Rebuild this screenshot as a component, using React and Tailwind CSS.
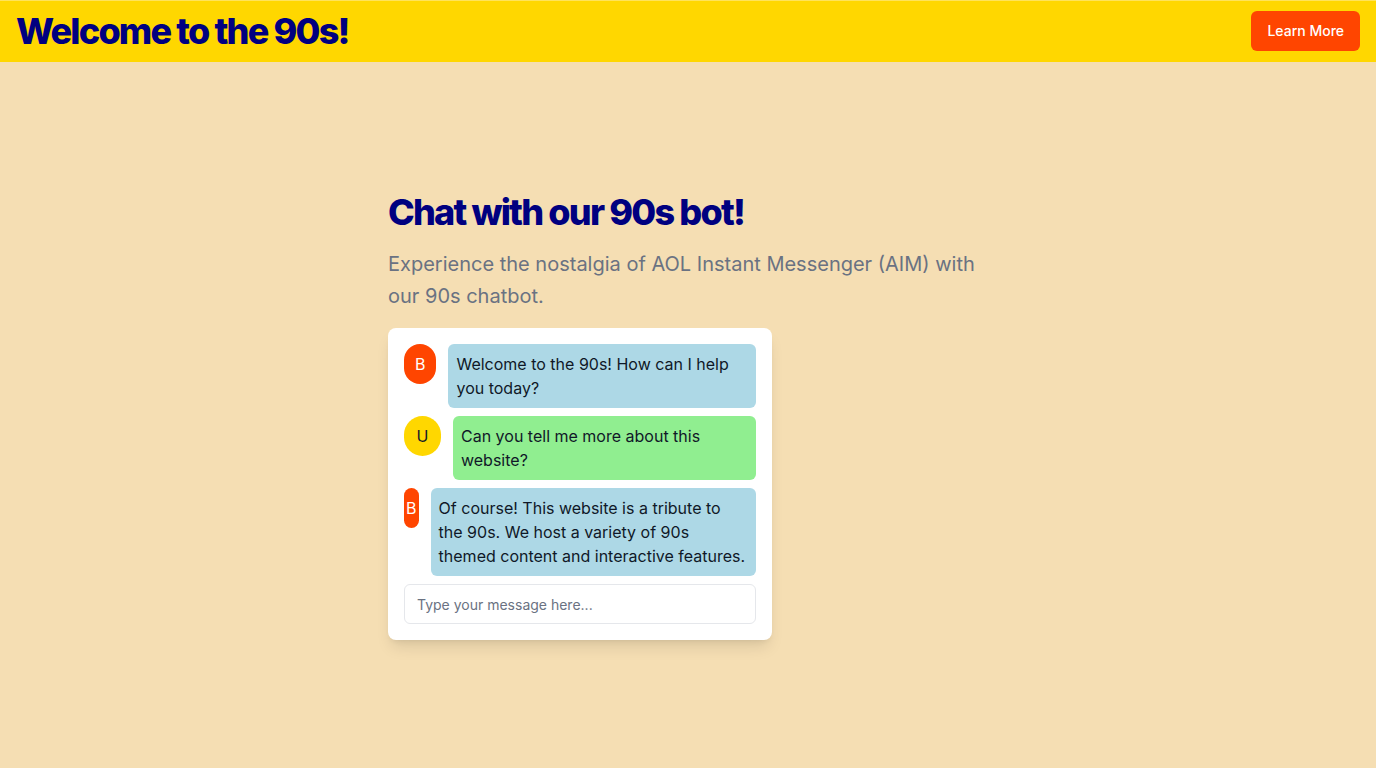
export default function App() {
  const font = { fontFamily: "Inter, 'Noto Sans', sans-serif" };
  return (
    <div className="min-h-screen flex flex-col bg-[#F5DEB3]" style={font}>
      <header className="h-[62px] flex items-center justify-between px-4 pb-px bg-[#FFD700] border-t border-[#ffe35a]">
        <h1 className="text-4xl font-extrabold tracking-tighter text-[#000080]">Welcome to the 90s!</h1>
        <button className="h-10 px-4 rounded-md bg-[#FF4500] text-white text-sm font-medium">Learn More</button>
      </header>
      <main className="flex-1 flex items-center justify-center pt-0.5">
        <div className="w-[600px] flex flex-col">
          <h2 className="text-4xl font-extrabold tracking-tighter text-[#000080] leading-10">Chat with our 90s bot!</h2>
          <p className="mt-4 text-xl leading-8 text-gray-500">
            Experience the nostalgia of AOL Instant Messenger (AIM) with our 90s chatbot.
          </p>
          <div className="mt-4 w-96 bg-white rounded-lg shadow-lg p-4 flex flex-col gap-2">
            <div className="flex gap-3">
              <div className="w-10 h-10 rounded-full bg-[#FF4500] text-white flex items-center justify-center">B</div>
              <div className="p-2 rounded-md bg-[#ADD8E6] text-gray-900">Welcome to the 90s! How can I help you today?</div>
            </div>
            <div className="flex gap-3">
              <div className="w-10 h-10 rounded-full bg-[#FFD700] text-gray-900 flex items-center justify-center">U</div>
              <div className="p-2 rounded-md bg-[#90EE90] text-gray-900">Can you tell me more about this website?</div>
            </div>
            <div className="flex gap-3">
              <div className="w-10 h-10 rounded-full bg-[#FF4500] text-white flex items-center justify-center">B</div>
              <div className="p-2 rounded-md bg-[#ADD8E6] text-gray-900">Of course! This website is a tribute to the 90s. We host a variety of 90s themed content and interactive features.</div>
            </div>
            <input
              className="h-10 w-full rounded-md border border-gray-200 px-3 text-sm placeholder:text-gray-500 outline-none"
              placeholder="Type your message here..."
            />
          </div>
        </div>
      </main>
    </div>
  );
}
